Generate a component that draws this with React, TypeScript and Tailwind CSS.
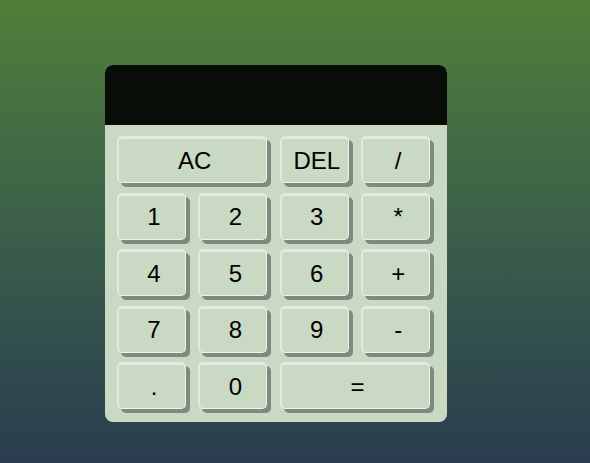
import React from "react";

const btn =
  "h-[47px] rounded-[5px] border-t-[3px] border-l-2 border-r border-b border-t-[#e3e8e1] border-l-[#e3e8e1] border-r-[#eef2ec] border-b-[#eef2ec] bg-[#c9d9c3] shadow-[4px_4px_0_#7f897e] text-[24px] text-black flex items-center justify-center leading-none pl-[4px]";

export default function App() {
  const keys: { label: string; span?: boolean }[] = [
    { label: "AC", span: true },
    { label: "DEL" },
    { label: "/" },
    { label: "1" },
    { label: "2" },
    { label: "3" },
    { label: "*" },
    { label: "4" },
    { label: "5" },
    { label: "6" },
    { label: "+" },
    { label: "7" },
    { label: "8" },
    { label: "9" },
    { label: "-" },
    { label: "." },
    { label: "0" },
    { label: "=", span: true },
  ];
  return (
    <div
      className="w-full min-h-screen h-[463px] bg-gradient-to-b from-[#4f8037] to-[#2a3d4f] pt-[65px] pl-[105px]"
      style={{ fontFamily: '"Liberation Sans", Arial, sans-serif' }}
    >
      <div className="w-[342px] rounded-[8px] overflow-hidden bg-[#c9d9c3]">
        <div className="h-[60px] bg-[#080d07]" />
        <div className="grid grid-cols-[repeat(4,69px)] gap-x-[12.4px] gap-y-[9.5px] pl-[12px] pt-[11px] pb-[13px]">
          {keys.map((k) => (
            <button key={k.label} className={`${btn} ${k.span ? "col-span-2" : ""}`}>
              {k.label}
            </button>
          ))}
        </div>
      </div>
    </div>
  );
}
